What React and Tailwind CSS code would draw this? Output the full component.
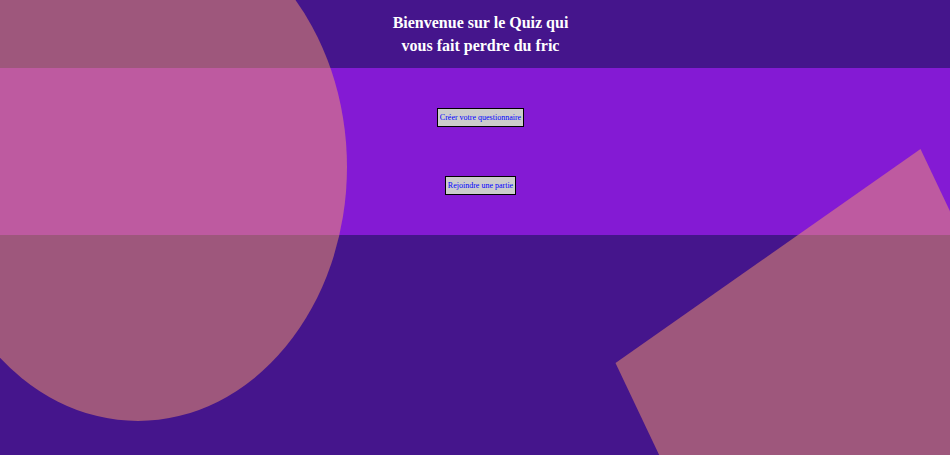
const links = [
  { href: "#creer", label: "Créer votre questionnaire" },
  { href: "#rejoindre", label: "Rejoindre une partie" },
];

function Shapes() {
  return (
    <div aria-hidden="true" className="pointer-events-none absolute inset-0 overflow-hidden">
      <svg className="absolute left-0 top-0 h-[421px] w-[347px]" viewBox="0 0 347 421">
        <ellipse cx="138" cy="167" rx="209" ry="254" fill="#f7996c" fillOpacity="0.5" />
      </svg>
      <svg className="absolute right-0 top-[149px] h-[306px] w-[335px]" viewBox="615 149 335 306">
        <polygon points="615.5,363 920.5,149 1070,464 765,678" fill="#f7996c" fillOpacity="0.5" />
      </svg>
    </div>
  );
}

export default function App() {
  return (
    <div className="relative min-h-screen bg-[#45158c] font-['Liberation_Serif',serif]">
      <header className="flex justify-center pt-[11px] pb-[11px] pl-[11px]">
        <h1 className="text-center text-[16px] leading-[23px] font-bold text-white">
          Bienvenue sur le Quiz qui
          <br />
          vous fait perdre du fric
        </h1>
      </header>
      <main className="bg-[#841ad4] py-10 pl-[11px]">
        <nav className="relative z-10 flex flex-col items-center gap-[49px]">
          {links.map(({ href, label }) => (
            <a
              key={href}
              href={href}
              className="border border-black bg-[#cccccc] px-0.5 text-[8px] leading-[17px] text-[#0000ff]"
            >
              {label}
            </a>
          ))}
        </nav>
      </main>
      <Shapes />
    </div>
  );
}
